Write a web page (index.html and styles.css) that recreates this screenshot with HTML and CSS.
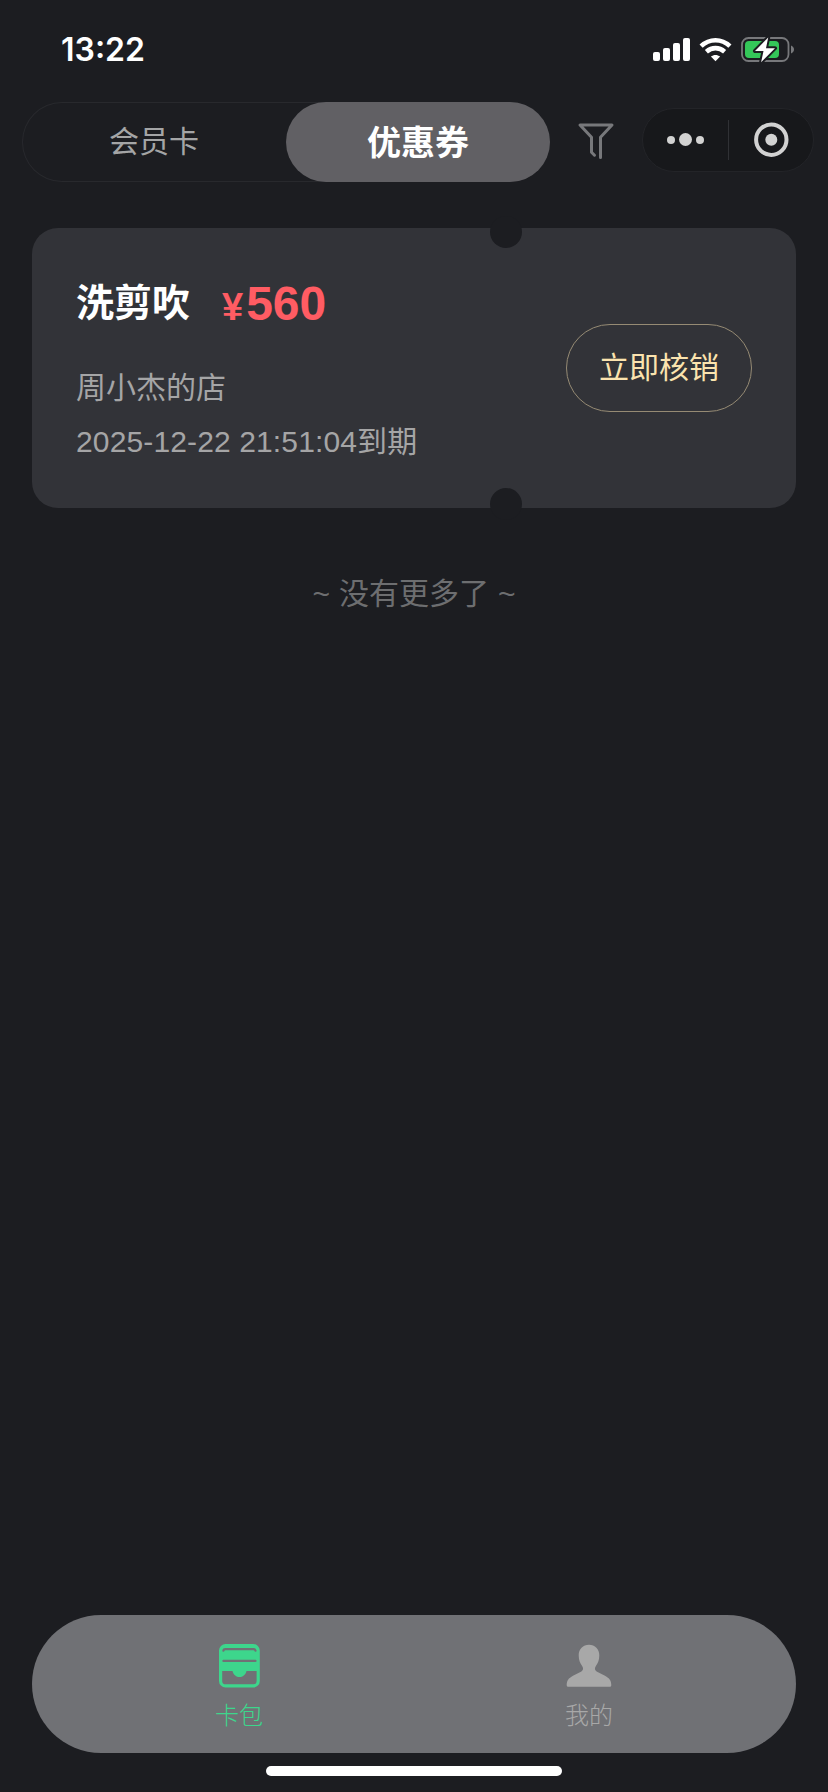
FILE: index.html
```html
<!DOCTYPE html>
<html lang="zh-CN">
<head>
  <meta charset="UTF-8" />
  <meta name="viewport" content="width=device-width, initial-scale=1.0"/>
  <title>优惠券</title>
  <link rel="stylesheet" href="styles.css">
</head>
<body>
  <div class="page">
    <div class="status-bar">
      <span class="time">13:22</span>
      <svg class="status-icons" width="142" height="26" viewBox="0 0 142 26">
        <g fill="#fff">
          <rect x="0" y="15" width="7" height="9" rx="2"/>
          <rect x="10" y="11" width="7" height="13" rx="2"/>
          <rect x="20" y="6" width="7" height="18" rx="2"/>
          <rect x="30" y="1" width="7" height="23" rx="2"/>
          <path d="M62.500 24.200L57.900 19.600C60.600 17.400 64.400 17.400 67.100 19.600Z"/>
        </g>
        <g fill="none" stroke="#fff" stroke-width="4.600">
          <path d="M48.100 9.200C56.400 1.300 68.600 1.300 76.900 9.200"/>
          <path d="M53.400 14.700C58.800 9.900 66.200 9.900 71.600 14.700"/>
        </g>
        <rect x="89" y="1" width="46.500" height="23" rx="6.500" fill="none" stroke="#77787b" stroke-width="1.800"/>
        <path d="M138 8.500c4 1.500 4 6.500 0 8z" fill="#77787b"/>
        <rect x="92" y="4" width="34" height="17" rx="4" fill="#34c759"/>
        <path d="M115.200 0.500L102 14h8.500l-2.400 11.200L122 11.200h-9z" fill="#fff" stroke="#1c1d21" stroke-width="4" stroke-linejoin="round" paint-order="stroke"/>
      </svg>
    </div>

    <div class="nav">
      <div class="tabs">
        <div class="tab">会员卡</div>
        <div class="tab active">优惠券</div>
      </div>
      <svg class="filter" width="38" height="38" viewBox="0 0 38 38">
        <g fill="none" stroke="#77787b" stroke-width="3" stroke-linecap="round" stroke-linejoin="round">
          <path d="M23.500 35.500V15.300L35 3H3l11.500 12.300V30.200l3 3"/>
        </g>
      </svg>
      <div class="capsule">
        <svg class="capsule-btn" width="85" height="62" viewBox="0 0 85 62" fill="#d2d2d2">
          <circle cx="28" cy="31" r="4"/>
          <circle cx="42.500" cy="30.500" r="6.500"/>
          <circle cx="57" cy="31" r="4"/>
        </svg>
        <span class="line"></span>
        <svg class="capsule-btn" width="84" height="62" viewBox="0 0 84 62">
          <circle cx="42.300" cy="30.700" r="15.200" fill="none" stroke="#d2d2d2" stroke-width="4"/>
          <circle cx="42.300" cy="30.700" r="6" fill="#d2d2d2"/>
        </svg>
      </div>
    </div>

    <div class="coupon">
      <div class="coupon-info">
        <div class="coupon-head">
          <span class="coupon-name">洗剪吹</span>
          <span class="coupon-price"><small>¥</small>560</span>
        </div>
        <p class="coupon-shop">周小杰的店</p>
        <p class="coupon-date">2025-12-22 21:51:04到期</p>
      </div>
      <button class="coupon-btn">立即核销</button>
    </div>

    <p class="no-more"><span>~</span>没有更多了<span>~</span></p>

    <div class="tabbar">
      <div class="tabbar-item current">
        <svg width="46" height="46" viewBox="0 0 46 46">
          <rect x="4.600" y="2.600" width="37.600" height="40.300" rx="5" fill="none" stroke="#3dd68c" stroke-width="3.200"/>
          <path d="M5 7Q6 3 9 3H38Q41 3 42 7V28H30.500C28.500 36 18.500 36 16.500 28H5z" fill="#3dd68c"/>
          <g fill="none" stroke="#707175" stroke-width="2.200" stroke-linecap="round">
            <path d="M7.400 7.600Q7.600 6.100 9.500 6.100H37.400Q39.300 6.100 39.500 7.600"/>
            <path d="M7.400 17.900H39.500"/>
          </g>
        </svg>
        <span>卡包</span>
      </div>
      <div class="tabbar-item">
        <svg width="46" height="46" viewBox="0 0 46 46">
          <path d="M23 1.800C29 1.800 33.300 6 33.300 12.300C33.300 17.500 31.800 20.500 30 22.800C28.400 25 28.600 27.300 30.600 28.400L39 32.700C43.500 35.200 45.300 37.500 45.300 42.300Q45.300 43.800 43.800 43.800H2.200Q0.700 43.800 0.700 42.300C0.700 37.500 2.500 35.200 7 32.700L15.400 28.400C17.400 27.300 17.600 25 16 22.800C14.200 20.500 12.700 17.500 12.700 12.300C12.700 6 17 1.800 23 1.800z" fill="#a8a8a8"/>
        </svg>
        <span>我的</span>
      </div>
    </div>
    <div class="home-indicator"></div>
  </div>
</body>
</html>
```

FILE: styles.css
```css
* {
  box-sizing: border-box;
  padding: 0;
  margin: 0;
}

body {
  background-color: #1c1d21;
  font-family: "Liberation Sans", "Noto Sans CJK SC", sans-serif;
  color: #fff;
}

.page {
  width: 828px;
  height: 1792px;
  display: flex;
  flex-direction: column;
  overflow: hidden;
}

.status-bar {
  height: 102px;
  padding: 30px 33px 0 61px;
  display: flex;
  justify-content: space-between;
  align-items: flex-start;
}

.time {
  font-family: Inter, sans-serif;
  font-size: 32px;
  font-weight: 600;
  line-height: 40px;
}

.status-icons {
  margin-top: 7px;
}

.nav {
  height: 80px;
  padding: 0 14px 0 22px;
  display: flex;
  align-items: flex-start;
}

.tabs {
  width: 528px;
  height: 80px;
  border-radius: 40px;
  box-shadow: inset 0 0 0 1px #28292d;
  display: flex;
}

.tab {
  width: 264px;
  line-height: 80px;
  text-align: center;
  font-size: 30px;
  color: #a4a5a6;
}

.tab.active {
  line-height: 82px;
  height: 80px;
  border-radius: 40px;
  background-color: #616064;
  color: #fff;
  font-size: 34px;
  font-weight: bold;
}

.filter {
  margin: 20px 0 0 27px;
}

.capsule {
  width: 172px;
  height: 64px;
  margin: 6px 0 0 auto;
  border: 1px solid #232428;
  border-radius: 32px;
  background-color: #17181b;
  display: flex;
  align-items: center;
}

.line {
  width: 1px;
  height: 40px;
  background-color: #303135;
}

.coupon {
  height: 280px;
  margin: 46px 32px 0;
  padding: 0 44px;
  border-radius: 26px;
  background-color: #323338;
  display: flex;
  justify-content: space-between;
  position: relative;
}

/* ticket notches */
.coupon::before,
.coupon::after {
  content: "";
  position: absolute;
  left: 458px;
  width: 32px;
  height: 32px;
  border-radius: 50%;
  background-color: #1c1d21;
}

.coupon::before {
  top: -12px;
}

.coupon::after {
  bottom: -12px;
}

.coupon-head {
  height: 60px;
  margin-top: 46px;
  display: flex;
}

.coupon-name {
  font-size: 38px;
  font-weight: bold;
  line-height: 58px;
}

.coupon-price {
  margin-left: 32px;
  color: #ff5c63;
  font-size: 48px;
  font-weight: bold;
  line-height: 60px;
}

.coupon-price small {
  font-size: 38px;
  margin-right: 3px;
}

.coupon-shop,
.coupon-date {
  color: #a5a5a6;
  font-size: 30px;
  line-height: 54px;
}

.coupon-shop {
  margin-top: 27px;
}

.coupon-date {
  letter-spacing: 0.13px;
}

.coupon-btn {
  width: 186px;
  height: 88px;
  margin-top: 96px;
  padding-bottom: 6px;
  border: 1px solid #968b74;
  border-radius: 44px;
  background: none;
  color: #fbe3ae;
  font-family: inherit;
  font-size: 30px;
}

.no-more {
  margin-top: 62px;
  line-height: 48px;
  text-align: center;
  font-size: 30px;
  color: #6d6e70;
}

.no-more span {
  margin: 0 9px;
}

.tabbar {
  height: 138px;
  margin: auto 32px 0;
  padding: 28px 32px 0;
  border-radius: 69px;
  background-color: #707175;
  display: flex;
}

.tabbar-item {
  flex: 1;
  display: flex;
  flex-direction: column;
  align-items: center;
  color: #a8a8a8;
  font-size: 24px;
  font-weight: 300;
  line-height: 36px;
}

.tabbar-item span {
  margin-top: 9px;
}

.tabbar-item.current {
  color: #3dd68c;
}

.home-indicator {
  width: 296px;
  height: 10px;
  margin: 13px auto 16px;
  border-radius: 5px;
  background-color: #fff;
}
```
